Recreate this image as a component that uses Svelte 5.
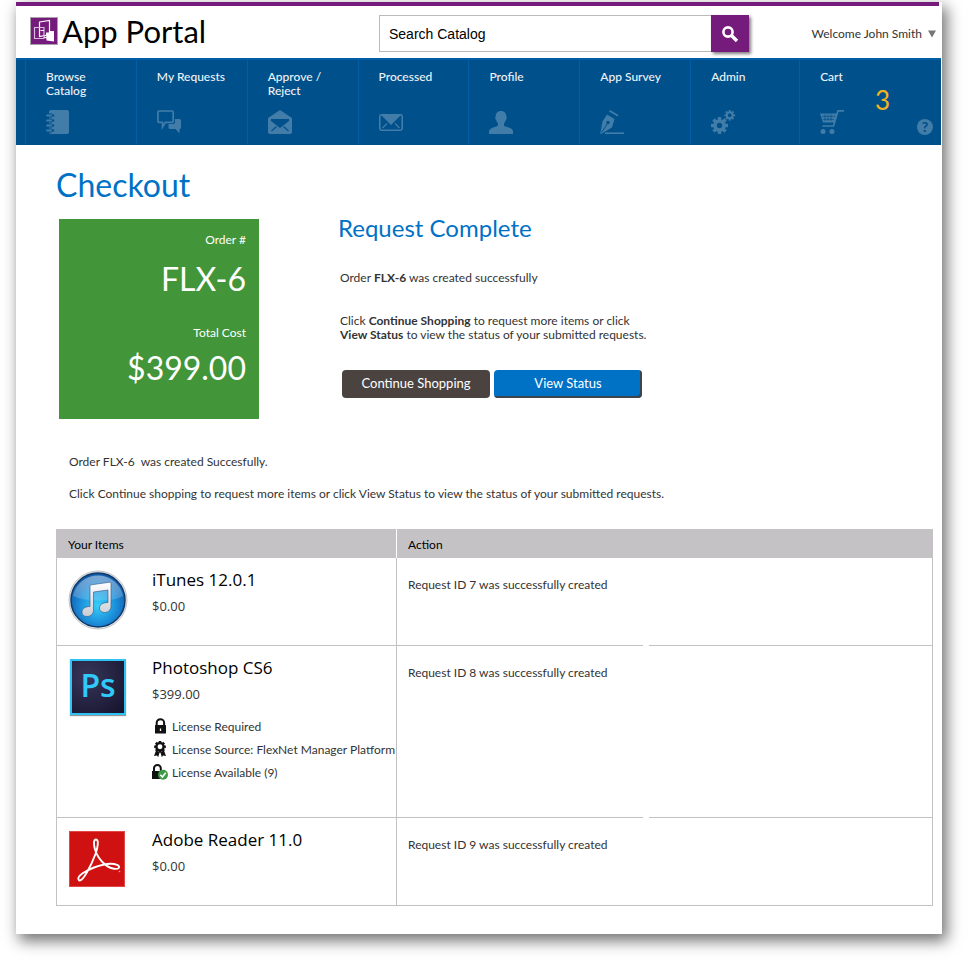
<script lang="ts">
	let searchTerm = 'Search Catalog';

	const cartCount = 3;

	const order = {
		id: 'FLX-6',
		total: '$399.00'
	};

	const navItems = [
		{ label: 'Browse Catalog', icon: 'catalog' },
		{ label: 'My Requests', icon: 'requests' },
		{ label: 'Approve / Reject', icon: 'approve' },
		{ label: 'Processed', icon: 'processed' },
		{ label: 'Profile', icon: 'profile' },
		{ label: 'App Survey', icon: 'survey' },
		{ label: 'Admin', icon: 'admin' },
		{ label: 'Cart', icon: 'cart' }
	];

	const items = [
		{ name: 'iTunes 12.0.1', price: '$0.00', icon: 'itunes', requestId: 7, licenses: [] },
		{
			name: 'Photoshop CS6',
			price: '$399.00',
			icon: 'photoshop',
			requestId: 8,
			licenses: [
				{ icon: 'lock', text: 'License Required' },
				{ icon: 'award', text: 'License Source: FlexNet Manager Platform' },
				{ icon: 'available', text: 'License Available (9)' }
			]
		},
		{ name: 'Adobe Reader 11.0', price: '$0.00', icon: 'reader', requestId: 9, licenses: [] }
	];

	// eight teeth around the centre of a gear
	const teeth = [0, 45, 90, 135, 180, 225, 270, 315];
</script>

<div class="page">
	<div class="accent"></div>

	<header>
		<a class="brand" href="#home">
			<svg width="28" height="28" viewBox="0 0 28 28" aria-hidden="true">
				<rect x="0.5" y="0.5" width="27" height="27" fill="#741b7c" stroke="#a9a0ab" />
				<path d="M9.500 5 19.500 3.500V17.500L9.500 19.500z" fill="none" stroke="#fff" stroke-width="1.200" />
				<path d="M4.500 10.500H14V21.500H4.500z" fill="none" stroke="#d9b8dd" stroke-width="1.200" />
				<path d="M14 13.500H10.500M14 20 17 21" fill="none" stroke="#fff" stroke-width="1.200" />
				<path d="M16 15.500H19L20 14H24V24.500L16.500 23.500z" fill="#fff" />
			</svg>
			<span>App Portal</span>
		</a>

		<form class="search" on:submit|preventDefault>
			<input type="text" aria-label="Search Catalog" bind:value={searchTerm} autocomplete="off" />
			<button type="submit" aria-label="Search">
				<svg width="18" height="18" viewBox="0 0 18 18">
					<circle cx="7" cy="7" r="4.600" fill="none" stroke="#fff" stroke-width="2.600" />
					<path d="M10.500 10.500 16 16" stroke="#fff" stroke-width="3.400" />
				</svg>
			</button>
		</form>

		<button class="user" type="button">
			Welcome John Smith
			<svg width="8" height="8" viewBox="0 0 8 8"><path d="M0 0.500H8L4 7.500z" fill="#777" /></svg>
		</button>
	</header>

	<nav>
		{#each navItems as item}
			<a class="nav-item" class:narrow={item.icon === 'admin'} href="#{item.icon}">
				<span class="nav-label">{item.label}</span>
				<svg width="24" height="24" viewBox="0 0 24 24" aria-hidden="true">
					{#if item.icon === 'catalog'}
						<path d="M5 0H21a2 2 0 0 1 2 2V22a2 2 0 0 1-2 2H5a2 2 0 0 1-2-2V2a2 2 0 0 1 2-2z" fill="#427da9" />
						<g fill="none">
							<path d="M0 5.500H6M0 10.500H6M0 15.500H6M0 20.500H6" stroke="#00508b" stroke-width="4" />
							<path d="M1 5.500H6M1 10.500H6M1 15.500H6M1 20.500H6" stroke="#427da9" stroke-width="1.800" stroke-linecap="round" />
						</g>
						<g fill="#00508b">
							<circle cx="7" cy="5.500" r="1.200" />
							<circle cx="7" cy="10.500" r="1.200" />
							<circle cx="7" cy="15.500" r="1.200" />
							<circle cx="7" cy="20.500" r="1.200" />
						</g>
					{:else if item.icon === 'requests'}
						<path d="M2 1H15a1.200 1.200 0 0 1 1.200 1.200V11A1.200 1.200 0 0 1 15 12.300H8.500L5.500 17V12.300H2A1.200 1.200 0 0 1 .9 11V2.200A1.200 1.200 0 0 1 2 1z" fill="none" stroke="#427da9" stroke-width="1.700" />
						<path d="M18 9H22.500A1.500 1.500 0 0 1 24 10.500V17.500A1.500 1.500 0 0 1 22.500 19V23.500L18.500 19H13a1.500 1.500 0 0 1-1.500-1.500V14H16a2 2 0 0 0 2-2z" fill="#427da9" />
					{:else if item.icon === 'approve'}
						<path d="M12 0 24 8V22a2 2 0 0 1-2 2H2a2 2 0 0 1-2-2V8z" fill="#427da9" />
						<path d="M3 9H21V11L12 18 3 11z" fill="#00508b" />
						<path d="M3.500 21 8.500 16.500M20.500 21 15.500 16.500" stroke="#00508b" stroke-width="1.200" />
					{:else if item.icon === 'processed'}
						<rect x="0.800" y="4.800" width="22.400" height="15.400" rx="1.600" fill="none" stroke="#427da9" stroke-width="1.600" />
						<path d="M2 5H22L12 15z" fill="#427da9" />
						<path d="M3.500 18 8 13.500M20.500 18 16 13.500" stroke="#427da9" stroke-width="1.200" />
					{:else if item.icon === 'profile'}
						<path d="M12 1C15.500 1 17.500 3.300 17.300 6.700c.8.300.6 2.600-.5 3.200-.4 1.600-1 2.500-1.800 3.300v2.300c1 1.600 9 2 9 6V24H0v-2.500c0-4 8-4.400 9-6v-2.300c-.8-.8-1.400-1.700-1.800-3.300C6.100 9.300 5.900 7 6.700 6.700 6.500 3.300 8.500 1 12 1z" fill="#427da9" />
					{:else if item.icon === 'survey'}
						<path d="M9.500 .8 18 5.800" stroke="#427da9" stroke-width="1.800" />
						<path d="M7 4.500 14.500 9 12 17.500 1 24 .3 23.500 2.500 11.500z" fill="#427da9" />
						<path d="M1.500 22.500 7.500 13.500" stroke="#00508b" stroke-width="1" />
						<circle cx="8" cy="12.500" r="1.700" fill="#00508b" />
						<path d="M5 23.200H24" stroke="#427da9" stroke-width="1.600" />
					{:else if item.icon === 'admin'}
						<g transform="translate(8.500 15.500)">
							{#each teeth as angle}
								<rect x="-1.700" y="-8.500" width="3.400" height="4" fill="#427da9" transform="rotate({angle})" />
							{/each}
							<circle r="4.500" fill="none" stroke="#427da9" stroke-width="3.600" />
						</g>
						<g transform="translate(18.700 5.300)">
							{#each teeth as angle}
								<rect x="-1" y="-5.300" width="2" height="3" fill="#427da9" transform="rotate({angle})" />
							{/each}
							<circle r="2.900" fill="none" stroke="#427da9" stroke-width="1.900" />
						</g>
					{:else if item.icon === 'cart'}
						<path d="M24 .8H18L13.500 16H2.500" fill="none" stroke="#427da9" stroke-width="1.700" />
						<path d="M0 3.500H16.500L14 12.500H3z" fill="#427da9" />
						<path d="M2 6.300H15M2.800 9.300H14M5 4.500V11M8 4.500V11M11 4.500V11" stroke="#00508b" stroke-width="0.700" />
						<circle cx="3" cy="21.500" r="2.500" fill="#427da9" />
						<circle cx="12" cy="21.500" r="2.500" fill="#427da9" />
					{/if}
				</svg>
				{#if item.icon === 'cart'}
					<span class="count">{cartCount}</span>
				{/if}
			</a>
		{/each}
		<a class="help" href="#help" aria-label="Help">?</a>
	</nav>

	<main>
		<h1>Checkout</h1>

		<section class="summary">
			<div class="tile">
				<p class="tile-label">Order #</p>
				<p class="tile-value order-id">{order.id}</p>
				<p class="tile-label">Total Cost</p>
				<p class="tile-value">{order.total}</p>
			</div>

			<div class="complete">
				<h2>Request Complete</h2>
				<p>Order <b>{order.id}</b> was created successfully</p>
				<p>
					Click <b>Continue Shopping</b> to request more items or click<br />
					<b>View Status</b> to view the status of your submitted requests.
				</p>
				<div class="actions">
					<button type="button" class="dark">Continue Shopping</button>
					<button type="button" class="blue">View Status</button>
				</div>
			</div>
		</section>

		<section class="notes">
			<p>Order {order.id}&nbsp; was created Succesfully.</p>
			<p>Click Continue shopping to request more items or click View Status to view the status of your submitted requests.</p>
		</section>

		<table>
			<thead>
				<tr>
					<th class="items-col">Your Items</th>
					<th>Action</th>
				</tr>
			</thead>
			<tbody>
				{#each items as item}
					<tr>
						<td>
							<div class="item">
								{#if item.icon === 'itunes'}
									<svg width="60" height="60" viewBox="0 0 60 60" aria-hidden="true">
										<defs>
											<radialGradient id="disc" cx="50%" cy="60%" r="58%">
												<stop offset="0" stop-color="#35d0fa" />
												<stop offset="0.600" stop-color="#1b8cd8" />
												<stop offset="1" stop-color="#1058a8" />
											</radialGradient>
											<linearGradient id="gloss" x1="0" y1="0" x2="0" y2="1">
												<stop offset="0" stop-color="#fff" stop-opacity="0.450" />
												<stop offset="1" stop-color="#fff" stop-opacity="0.150" />
											</linearGradient>
											<linearGradient id="note" x1="0" y1="0" x2="0" y2="1">
												<stop offset="0" stop-color="#fff" />
												<stop offset="1" stop-color="#c9ccd2" />
											</linearGradient>
										</defs>
										<circle cx="30" cy="30" r="29" fill="#e6e7e9" stroke="#c2c4c8" />
										<circle cx="30" cy="30" r="27" fill="url(#disc)" stroke="#123a68" stroke-width="1.500" />
										<path d="M5 26a25.500 25.500 0 0 1 50 0C46 32 17 32 5 26z" fill="url(#gloss)" />
										<path d="M22 16.500C22 15.500 22.500 15 23.500 14.800L41 12.300c1.300-.2 2 .3 2 1.500V36c0 4-2.500 6.500-6.500 6.500-3 0-5-1.700-5-4.300 0-3.500 3-5.500 8.500-5.700V20L25.500 22V40c0 4-3 6.500-6.500 6.500s-5-1.800-5-4.300c0-3.500 3-5.700 8-5.700z" fill="url(#note)" stroke="#28568a" stroke-width="0.600" />
									</svg>
								{:else if item.icon === 'photoshop'}
									<div class="ps" aria-hidden="true">Ps</div>
								{:else}
									<svg width="60" height="60" viewBox="0 0 60 60" aria-hidden="true">
										<rect x="1.500" y="1.500" width="55" height="55" fill="#cf1111" stroke="#e04848" />
										<path d="M10.500 49.500C9 46 17 41 26 37.500 34 34.500 44 32.800 49 34.800 53 36.500 51 39.500 46 38.800 38 37.500 30 29 27 19.500 25.500 14 25.500 9.500 28 9.500 31 9.500 30 17 27.500 24 23 36 15 51 11.500 50.500 11 50.300 10.700 50 10.500 49.500z" fill="none" stroke="#fff" stroke-width="1.900" />
										<circle cx="51.500" cy="41.500" r="0.800" fill="#f0a0a0" />
									</svg>
								{/if}

								<div class="details">
									<h3>{item.name}</h3>
									<p class="price">{item.price}</p>
									{#if item.licenses.length > 0}
										<ul>
											{#each item.licenses as license}
												<li>
													<svg width="16" height="16" viewBox="0 0 16 16" aria-hidden="true">
														{#if license.icon === 'lock'}
															<path d="M4.700 8V4.500a3.700 3.300 0 0 1 7.400 0V8" fill="none" stroke="#111" stroke-width="2" />
															<rect x="3" y="7" width="11" height="8.500" rx="0.500" fill="#111" />
															<path d="M8.500 10.500V13" stroke="#fff" stroke-width="1.300" />
														{:else if license.icon === 'award'}
															<g transform="translate(8 5.800)">
																{#each teeth as angle}
																	<rect x="-1.300" y="-5.800" width="2.600" height="3" fill="#111" transform="rotate({angle})" />
																{/each}
																<circle r="3.600" fill="#fff" stroke="#111" stroke-width="2.300" />
															</g>
															<path d="M4 9.500 7.700 11 6.200 16 4.800 14.600 2 15zM12 9.500 8.300 11 9.800 16 11.200 14.600 14 15z" fill="#111" />
														{:else}
															<path d="M2 8V4.200a3.400 3.200 0 0 1 6.800 0V7" fill="none" stroke="#111" stroke-width="2" />
															<path d="M0 7H11V15H0z" fill="#111" />
															<circle cx="11" cy="10.800" r="5" fill="#3d9a45" />
															<path d="M8.300 10.800 10.400 13 13.700 8.700" fill="none" stroke="#fff" stroke-width="1.600" />
														{/if}
													</svg>
													<span>{license.text}</span>
												</li>
											{/each}
										</ul>
									{/if}
								</div>
							</div>
						</td>
						<td class="action">Request ID {item.requestId} was successfully created</td>
					</tr>
				{/each}
			</tbody>
		</table>
	</main>
</div>

<style>
	:global(body) {
		background: #fff;
	}
	.page {
		margin: 2px 30px 26px 16px;
		padding-bottom: 28px;
		background: #fff;
		box-shadow: 4px 6px 14px 1px rgba(0, 0, 0, 0.55);
		font-family: Lato, sans-serif;
		font-size: 12px;
		line-height: 14px;
		color: #333;
	}
	h1, h2, h3, p, ul {
		margin: 0;
		padding: 0;
		font-weight: 400;
	}
	button {
		font-family: inherit;
		cursor: pointer;
	}
	.accent {
		height: 4px;
		margin-right: 3px;
		background: #741b7c;
	}

	header {
		display: flex;
		align-items: center;
		box-sizing: border-box;
		height: 52px;
		padding: 3px 6px 0 14px;
	}
	.brand {
		display: flex;
		flex: 0 0 349px;
		align-items: center;
		align-self: flex-start;
		gap: 4px;
		color: #000;
		font-size: 31px;
		line-height: 44px;
		text-decoration: none;
	}
	.search {
		display: flex;
		flex: 0 1 370px;
		height: 37px;
	}
	.search input {
		flex: 1;
		min-width: 0;
		box-sizing: border-box;
		padding: 0 9px;
		border: 1px solid #bbb;
		border-right: 0;
		font-family: "Liberation Sans", Arial, sans-serif;
		font-size: 14px;
		color: #000;
	}
	.search button {
		display: flex;
		align-items: center;
		justify-content: center;
		width: 38px;
		padding: 0;
		border: 0;
		background: #741b7c;
		box-shadow: 2px 2px 3px rgba(0, 0, 0, 0.5);
	}
	.user {
		display: flex;
		align-items: center;
		gap: 6px;
		margin-left: auto;
		padding: 0;
		border: 0;
		background: none;
		font-size: 12px;
		color: #333;
		white-space: nowrap;
	}

	nav {
		display: flex;
		height: 85px;
		margin-right: 1px;
		padding-left: 9px;
		border-top: 2px solid #005fa6;
		background: #00508b;
	}
	.nav-item {
		position: relative;
		display: flex;
		flex: 111 1 0;
		flex-direction: column;
		justify-content: space-between;
		box-sizing: border-box;
		height: 84px;
		padding: 10px 20px;
		border-left: 1px solid #005fa6;
		color: #eef3f8;
		font-weight: 500;
		text-decoration: none;
	}
	.nav-item.narrow {
		flex-grow: 108;
	}
	.nav-label {
		max-width: 70px;
	}
	.count {
		position: absolute;
		top: 26px;
		right: 20px;
		color: #f0b41c;
		font-size: 26px;
		font-weight: 400;
		line-height: 28px;
	}
	.help {
		display: flex;
		align-items: center;
		justify-content: center;
		align-self: flex-end;
		width: 16px;
		height: 16px;
		margin: 0 8px 10px 6px;
		border-left: 1px solid #00508b;
		border-radius: 50%;
		background: #427da9;
		color: #00508b;
		font-size: 14px;
		font-weight: 900;
		text-decoration: none;
	}

	main {
		padding: 20px 9px 0 40px;
	}
	h1 {
		color: #0072c6;
		font-size: 32px;
		line-height: 40px;
	}
	.summary {
		display: flex;
		gap: 79px;
		padding: 14px 0 0 3px;
	}
	.tile {
		box-sizing: border-box;
		width: 200px;
		height: 200px;
		padding: 14px 13px;
		background: #429539;
		color: #fff;
		text-align: right;
	}
	.tile-value {
		margin-top: 8px;
		font-size: 32px;
		line-height: 40px;
	}
	.order-id {
		margin: 12px 0 27px;
	}
	h2 {
		color: #0072c6;
		font-size: 24px;
		line-height: 18px;
	}
	.complete p {
		margin: 34px 0 0 2px;
	}
	.complete p + p {
		margin-top: 29px;
	}
	.actions {
		display: flex;
		gap: 4px;
		margin: 28px 0 0 4px;
	}
	.actions button {
		width: 148px;
		height: 28px;
		padding: 0 0 2px;
		border: 0;
		border-radius: 4px;
		color: #fff;
		font-size: 13px;
	}
	.dark {
		background: #4a4340;
	}
	.blue {
		background: #0072c6;
		box-shadow: inset -2px -2px 0 #3d444c;
	}

	.notes {
		padding: 34px 13px 0;
		line-height: 18px;
	}
	.notes p + p {
		margin-top: 14px;
	}

	table {
		width: 100%;
		margin-top: 26px;
		border-collapse: separate;
		border-spacing: 0;
		table-layout: fixed;
	}
	.items-col {
		width: 340px;
	}
	th {
		box-sizing: border-box;
		height: 29px;
		padding: 2px 11px 0;
		border-left: 1px solid #fff;
		background: #c5c2c5;
		color: #000;
		font-weight: 400;
		text-align: left;
	}
	th:first-child {
		border-left-color: #c5c2c5;
	}
	td {
		position: relative;
		padding: 12px 6px 15px 11px;
		border-bottom: 1px solid #c2c2c4;
		border-left: 1px solid #c2c2c4;
		vertical-align: top;
	}
	td.action {
		padding: 20px 11px;
		border-right: 1px solid #c2c2c4;
	}
	/* break in the divider between two rows */
	tr:not(:last-child) .action::after {
		content: "";
		position: absolute;
		bottom: -1px;
		left: 46%;
		width: 6px;
		height: 1px;
		background: #fff;
	}
	.item {
		display: flex;
		gap: 24px;
	}
	.item > svg {
		flex: none;
	}
	.ps {
		box-sizing: border-box;
		flex: none;
		width: 56px;
		height: 56px;
		margin: 1px 2px 0;
		border: 2px solid #2fc3f5;
		background: radial-gradient(circle at 30% 30%, #37365a, #14122b);
		box-shadow: 0 1px 1px #999;
		color: #2fc9fa;
		font-family: "Open Sans", sans-serif;
		font-size: 32px;
		font-weight: 600;
		line-height: 48px;
		text-align: center;
	}
	.details {
		min-width: 0;
	}
	h3 {
		color: #000;
		font-family: "Open Sans", "Noto Sans", sans-serif;
		font-size: 17px;
		line-height: 20px;
	}
	.price {
		margin-top: 7px;
		font-family: "Open Sans", "Noto Sans", sans-serif;
		font-size: 13px;
		line-height: 18px;
	}
	ul {
		margin: 15px 0;
		list-style: none;
	}
	li {
		display: flex;
		gap: 4px;
		height: 23px;
		line-height: 18px;
	}
	li svg {
		flex: none;
	}
	li span {
		white-space: nowrap;
	}
</style>
